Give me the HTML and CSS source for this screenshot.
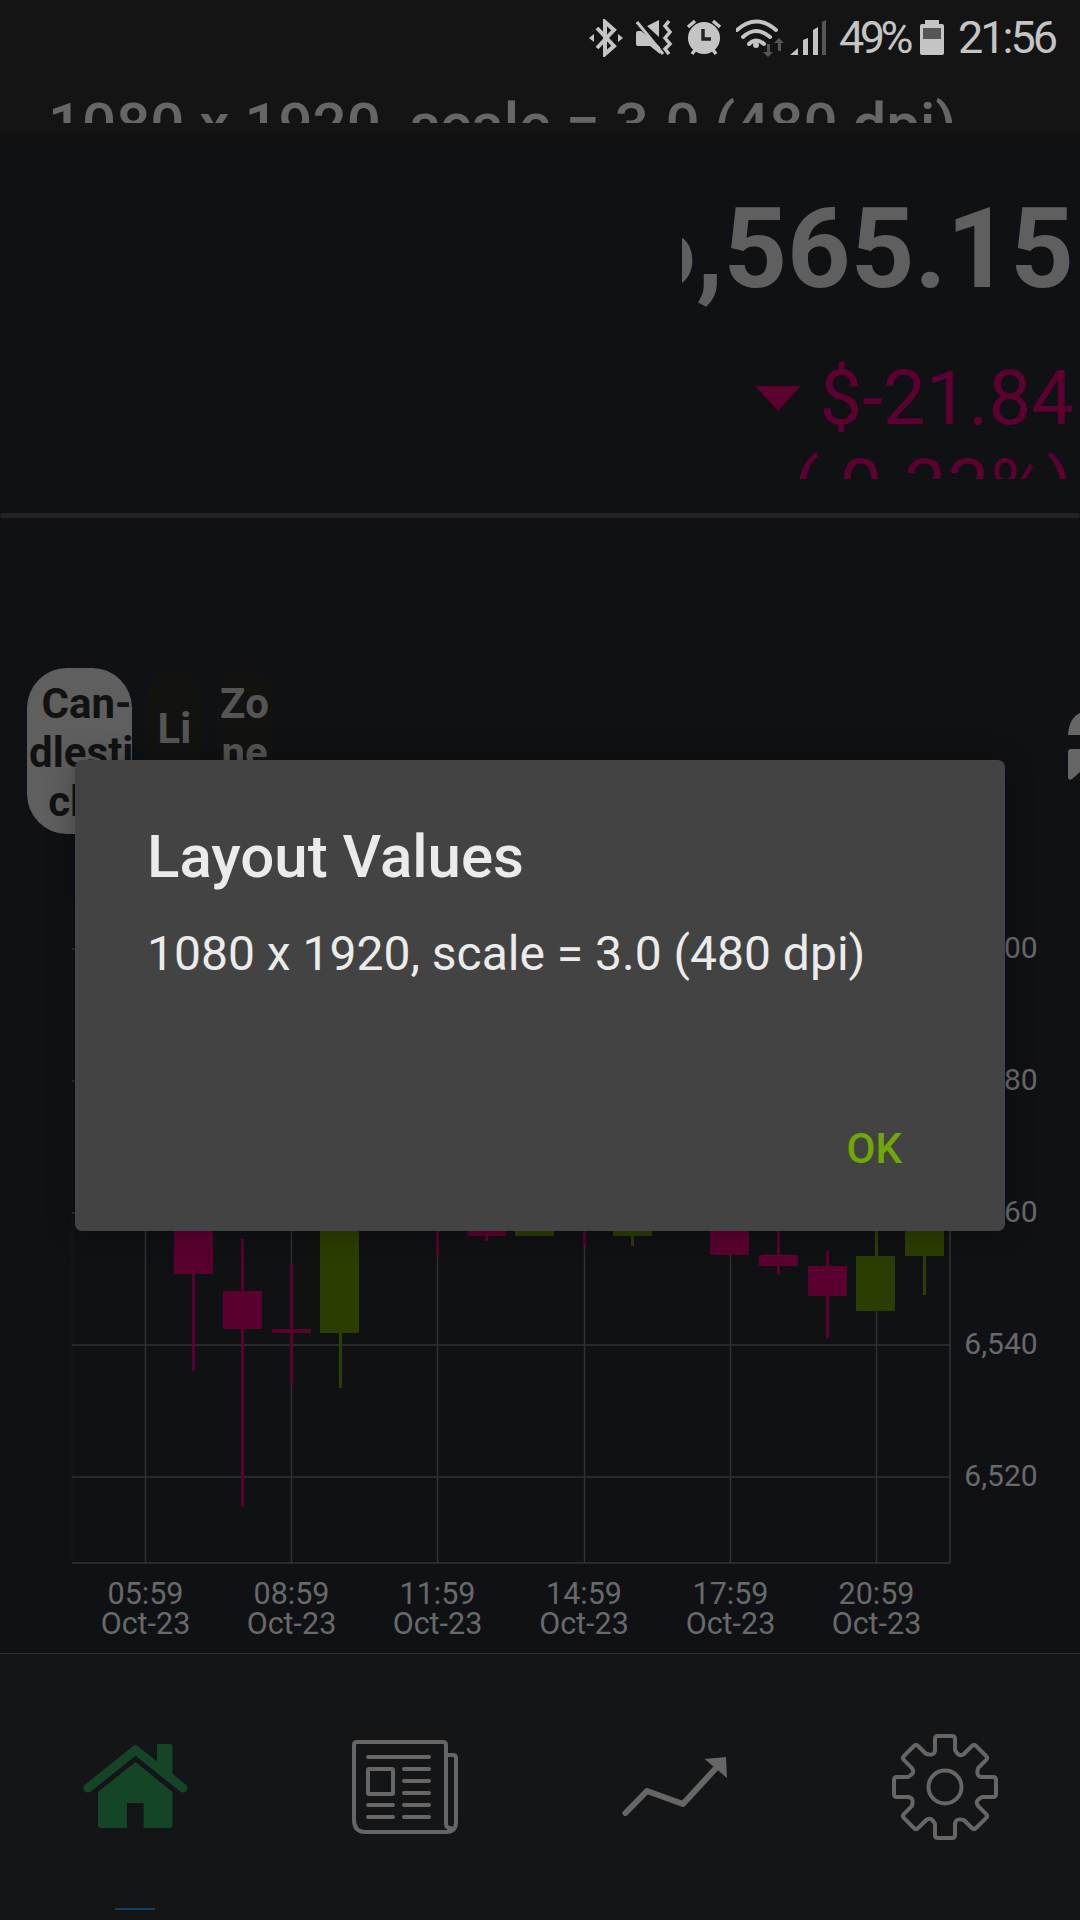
FILE: index.html
```html
<!DOCTYPE html>
<html lang="en">
  <head>
    <meta charset="UTF-8" />
    <meta name="viewport" content="width=device-width, initial-scale=1.0" />
    <title>Layout Values</title>
    <link rel="stylesheet" href="styles.css">
  </head>
  <body>
    <div id="phone">
      <header class="top-band">
        <div class="status-bar">
          <svg class="st-bluetooth" width="34" height="38" viewBox="0 0 34 38">
            <path class="st-line" d="M8 9 L25 27 L16 35 V3 L25 11 L8 29" />
            <path class="st-fill" d="M0 19 L5 15 V23 Z M34 19 L29 15 V23 Z" />
          </svg>
          <svg class="st-mute" width="37" height="35" viewBox="0 0 37 35">
            <path class="st-fill" d="M0 13 Q0 11 2 11 H5 L16 20 L24 27 V34 L14 26 H2 Q0 26 0 24 Z M11 6 L23 0 V17 Z" />
            <path class="st-cut" d="M1 2 L27 34" />
            <path class="st-line thin" d="M33 1 L29 6 L34 12 L29 18 L34 24 L29 29 L33 34" />
          </svg>
          <svg class="st-alarm" width="37" height="37" viewBox="0 0 37 37">
            <circle class="st-fill" cx="18" cy="19" r="16" />
            <path class="st-line thin" d="M2 8 L9 2 M34 8 L27 2 M6 35 L9 31 M30 35 L27 31" />
            <path class="st-hand" d="M17 10 V20 H25" />
          </svg>
          <svg class="st-wifi" width="48" height="38" viewBox="0 0 48 38">
            <path class="st-arc" d="M1 11 Q20 -6 40 11" />
            <path class="st-arc" d="M7 18 Q20 6 34 18" />
            <path class="st-arc" d="M13 25 Q20 18 28 25" />
            <circle class="st-fill" cx="20" cy="26" r="3" />
            <path class="st-dim" d="M31 25 H34 V33 H37 L32 38 L27 33 H31 Z M43 19 L48 24 H45 V32 H42 V24 H38 Z" />
          </svg>
          <svg class="st-signal" width="36" height="36" viewBox="0 0 36 36">
            <path class="st-fill" d="M0 35 L8 28 V35 Z M13 20 L18 18 V35 H13 Z M23 10 L28 7 V35 H23 Z" />
            <path class="st-dim" d="M32 2 L36 0 V35 H32 Z" />
          </svg>
          <span class="st-text">49%</span>
          <svg class="st-battery" width="24" height="35" viewBox="0 0 24 35">
            <path class="st-fill" d="M5 0 H19 V4 H22 Q24 4 24 6 V33 Q24 35 22 35 H2 Q0 35 0 33 V6 Q0 4 2 4 H5 Z" />
            <rect class="st-dim" x="3" y="8" width="18" height="11" />
          </svg>
          <span class="st-text time">21:56</span>
        </div>
        <div class="ghost-title">1080 x 1920, scale = 3.0 (480 dpi)</div>
      </header>

      <section class="quote">
        <div class="price"><span>6,565.15</span></div>
        <div class="change">
          <svg class="arrow-down" width="46" height="25" viewBox="0 0 46 25"><path d="M0 0 H46 L23 25 Z" /></svg>
          <span>$-21.84</span>
        </div>
        <div class="percent">( 0.33%)</div>
      </section>
      <div class="divider"></div>

      <div class="tabs">
        <div class="pill active">Can-<br />dlesti&nbsp;<br />cks&nbsp;</div>
        <div class="pill">Li<br />ne</div>
        <div class="pill">Zo<br />ne<br />s</div>
        <svg class="side-icon" width="12" height="67" viewBox="0 0 12 67">
          <path d="M0 22 Q1 5 12 0 V22 Z M12 36 H3 Q0 36 0 39 V64 Q0 68 4 66 L12 59 Z" />
        </svg>
      </div>

      <svg class="chart" width="1080" height="819" viewBox="0 834 1080 819">
        <g class="grid">
          <path class="axis-left" d="M72 900 V1563" />
          <path d="M72 949 H950 M72 1081 H950 M72 1213 H950 M72 1345 H950 M72 1477 H950" />
          <path d="M145.5 900 V1563 M291.5 900 V1563 M437.5 900 V1563 M584.5 900 V1563 M730.5 900 V1563 M876.5 900 V1563" />
          <path class="axis" d="M72 1563 H950 V900" />
        </g>

        <g class="down">
          <rect x="192" y="1200" width="3" height="171" />
          <rect x="174" y="1200" width="39" height="74" />
          <rect x="241" y="1239" width="3" height="268" />
          <rect x="223" y="1291" width="39" height="38" />
          <rect x="290" y="1264" width="3" height="121" />
          <rect x="272" y="1329" width="39" height="4" />
          <rect x="436" y="1200" width="3" height="56" />
          <rect x="485" y="1200" width="3" height="41" />
          <rect x="467" y="1200" width="39" height="36" />
          <rect x="583" y="1200" width="3" height="46" />
          <rect x="710" y="1200" width="39" height="55" />
          <rect x="777" y="1200" width="3" height="75" />
          <rect x="759" y="1255" width="39" height="11" />
          <rect x="826" y="1251" width="3" height="87" />
          <rect x="808" y="1266" width="39" height="30" />
        </g>
        <g class="up">
          <rect x="339" y="1200" width="3" height="188" />
          <rect x="320" y="1200" width="39" height="133" />
          <rect x="515" y="1200" width="39" height="36" />
          <rect x="631" y="1200" width="3" height="46" />
          <rect x="613" y="1200" width="39" height="36" />
          <rect x="875" y="1200" width="3" height="56" />
          <rect x="856" y="1256" width="39" height="55" />
          <rect x="923" y="1200" width="3" height="95" />
          <rect x="905" y="1200" width="39" height="56" />
        </g>

        <g class="y-labels">
          <text x="1001" y="958">6,600</text>
          <text x="1001" y="1090">6,580</text>
          <text x="1001" y="1222">6,560</text>
          <text x="1001" y="1354">6,540</text>
          <text x="1001" y="1486">6,520</text>
        </g>
        <g class="x-labels">
          <text x="145.5" y="1604">05:59</text><text x="145.5" y="1634">Oct-23</text>
          <text x="291.5" y="1604">08:59</text><text x="291.5" y="1634">Oct-23</text>
          <text x="437.5" y="1604">11:59</text><text x="437.5" y="1634">Oct-23</text>
          <text x="584" y="1604">14:59</text><text x="584" y="1634">Oct-23</text>
          <text x="730.5" y="1604">17:59</text><text x="730.5" y="1634">Oct-23</text>
          <text x="876.5" y="1604">20:59</text><text x="876.5" y="1634">Oct-23</text>
        </g>
      </svg>

      <nav class="bottom-nav">
        <div class="nav-item current">
          <svg width="105" height="85" viewBox="0 0 105 85">
            <path class="home-roof" d="M5 44 L52.5 6 L100 44" />
            <path class="home-fill" d="M74 0 H86 Q89.5 0 89.5 3 V30 L74 18 Z" />
            <path class="home-fill" d="M52.5 18 L89.5 48 V81 Q89.5 84 86 84 H60.6 V59 H44 V84 H18 Q15 84 15 81 V48 Z" />
          </svg>
        </div>
        <div class="nav-item">
          <svg width="106" height="94" viewBox="0 0 106 94">
            <path class="nav-line" d="M94 15 H101 Q104 15 104 18 V82 Q104 92 94 92 H14 Q2 92 2 80 V5 Q2 2 5 2 H91 Q94 2 94 5 V84 Q94 88 99 88" />
            <path class="nav-line" d="M16 17 H77 M52 29 H77 M52 41 H77 M52 53 H77 M16 65 H41 M52 65 H77 M16 77 H41 M52 77 H77" />
            <rect class="nav-line" x="16" y="29" width="25" height="25" rx="1" />
          </svg>
        </div>
        <div class="nav-item">
          <svg width="106" height="60" viewBox="0 0 106 60">
            <path class="nav-trend" d="M3.5 56 L25 34 L61 47 L95 10" />
            <path class="nav-fill" d="M82.6 2 L104 0 L105 21 Z" />
          </svg>
        </div>
        <div class="nav-item">
          <svg width="106" height="106" viewBox="-53 -53 106 106">
            <defs>
              <path id="gear-tooth" d="M-10 -37 V-48 Q-10 -51 -7 -51 H7 Q10 -51 10 -48 V-37 Q14 -29 19.1 -33.2" />
            </defs>
            <g class="nav-line">
              <use href="#gear-tooth" />
              <use href="#gear-tooth" transform="rotate(45)" />
              <use href="#gear-tooth" transform="rotate(90)" />
              <use href="#gear-tooth" transform="rotate(135)" />
              <use href="#gear-tooth" transform="rotate(180)" />
              <use href="#gear-tooth" transform="rotate(225)" />
              <use href="#gear-tooth" transform="rotate(270)" />
              <use href="#gear-tooth" transform="rotate(315)" />
              <circle r="16.5" />
            </g>
          </svg>
        </div>
        <div class="nav-marker"></div>
      </nav>

      <div class="dialog">
        <h2 class="dialog-title">Layout Values</h2>
        <p class="dialog-text">1080 x 1920, scale = 3.0 (480 dpi)</p>
        <div class="dialog-ok">OK</div>
      </div>
    </div>
  </body>
</html>
```

FILE: styles.css
```css
body {
  margin: 0;
  background: #0f1115;
  font-family: Roboto, "Liberation Sans", sans-serif;
}
#phone {
  position: relative;
  width: 1080px;
  height: 1920px;
  overflow: hidden;
  background: #0f1115;
}

/* status bar + clipped title */
.top-band {
  height: 135px;
  background: #141414;
}
.status-bar {
  display: flex;
  justify-content: flex-end;
  align-items: center;
  height: 75px;
  padding-right: 25px;
  box-sizing: border-box;
}
.status-bar svg {
  display: block;
  flex: none;
}
.st-bluetooth { margin-right: 13px; }
.st-mute { margin-right: 13px; }
.st-alarm { margin-right: 13px; }
.st-wifi { margin-right: 6px; }
.st-signal { margin-right: 13px; }
.st-battery { margin-right: 14px; }
.st-fill { fill: #c4c4c4; }
.st-dim { fill: #565656; }
.st-line {
  fill: none;
  stroke: #c4c4c4;
  stroke-width: 4;
}
.st-line.thin { stroke-width: 3.5; }
.st-cut {
  fill: none;
  stroke: #c4c4c4;
  stroke-width: 3;
}
.st-hand {
  fill: none;
  stroke: #222;
  stroke-width: 3.5;
}
.st-arc {
  fill: none;
  stroke: #c4c4c4;
  stroke-width: 4;
  stroke-linecap: round;
}
.st-text {
  font-size: 45px;
  line-height: 50px;
  color: #c4c4c4;
  letter-spacing: -4.5px;
  margin-right: 11px;
}
.st-text.time {
  letter-spacing: -3px;
  margin-right: 0;
}
.ghost-title {
  height: 48px;
  box-sizing: border-box;
  overflow: hidden;
  padding: 20px 0 0 48px;
  font-size: 60px;
  font-weight: 500;
  line-height: 60px;
  white-space: nowrap;
  color: #666;
}

/* quote */
.quote {
  display: flex;
  flex-direction: column;
  align-items: flex-end;
  height: 378px;
  padding-right: 6px;
  box-sizing: border-box;
}
.price {
  display: flex;
  justify-content: flex-end;
  width: 392px;
  height: 130px;
  margin-top: 49px;
  overflow: hidden;
  font-size: 111px;
  font-weight: 700;
  line-height: 130px;
  white-space: nowrap;
  color: #5f5f5f;
}
.change {
  display: flex;
  align-items: center;
  height: 89px;
  margin-top: 40px;
  font-size: 76px;
  line-height: 89px;
  color: #5c0030;
}
.arrow-down {
  margin-right: 18px;
  fill: #5c0030;
}
.percent {
  height: 36px;
  overflow: hidden;
  font-size: 76px;
  line-height: 89px;
  letter-spacing: 0.7px;
  white-space: nowrap;
  color: #5c0030;
}
.divider {
  height: 5px;
  border-radius: 3px;
  background: #222;
}

/* chart type tabs */
.tabs {
  display: flex;
  gap: 15px;
  height: 166px;
  margin-top: 150px;
  padding-left: 27px;
}
.pill {
  display: flex;
  align-items: center;
  justify-content: center;
  width: 55px;
  box-sizing: border-box;
  padding-top: 3px;
  overflow: hidden;
  border-radius: 40px;
  background: #121311;
  font-size: 42px;
  font-weight: 700;
  line-height: 49px;
  text-align: center;
  color: #555;
}
.pill.active {
  width: 105px;
  padding-left: 14px;
  background: #5f5f5f;
  color: #121212;
}
.side-icon {
  margin: 45px 0 0 auto;
  fill: #666;
}

/* chart */
.chart {
  display: block;
}
.grid path {
  fill: none;
  stroke: #313131;
  stroke-width: 1.5;
}
.grid .axis {
  stroke: #343434;
}
.grid .axis-left {
  stroke: #15170f;
}
.down { fill: #59002f; }
.up { fill: #2c3d00; }
.y-labels text,
.x-labels text {
  font-family: Roboto, "Liberation Sans", sans-serif;
  font-size: 30px;
  text-anchor: middle;
  fill: #696969;
}
.x-labels text {
  font-size: 30.5px;
}

/* bottom nav */
.bottom-nav {
  position: relative;
  display: grid;
  grid-template-columns: repeat(4, 270px);
  height: 267px;
  box-sizing: border-box;
  border-top: 1.5px solid #2e2e2e;
  background: #141517;
}
.nav-item {
  display: flex;
  align-items: center;
  justify-content: center;
  height: 265px;
}
.nav-item svg {
  display: block;
  overflow: visible;
}
.nav-line {
  fill: none;
  stroke: #666;
  stroke-width: 4;
  stroke-linecap: round;
  stroke-linejoin: round;
}
.nav-trend {
  fill: none;
  stroke: #666;
  stroke-width: 6;
  stroke-linecap: round;
  stroke-linejoin: round;
}
.nav-fill { fill: #666; }
.home-roof {
  fill: none;
  stroke: #144526;
  stroke-width: 9;
  stroke-linecap: round;
  stroke-linejoin: round;
}
.home-fill { fill: #144526; }
.nav-marker {
  position: absolute;
  left: 115px;
  bottom: 10px;
  width: 40px;
  height: 2px;
  background: #134060;
}

/* dialog */
.dialog {
  position: absolute;
  top: 760px;
  left: 75px;
  display: flex;
  flex-direction: column;
  width: 930px;
  height: 471px;
  box-sizing: border-box;
  padding: 62px 103px 58px 72px;
  border-radius: 7px;
  background: #434343;
  box-shadow: 0 0 30px rgba(0, 0, 0, 0.3);
}
.dialog-title {
  margin: 0;
  font-size: 60px;
  font-weight: 500;
  line-height: 70px;
  color: #ebebeb;
}
.dialog-text {
  margin: 34px 0 0;
  font-size: 48px;
  line-height: 56px;
  color: #ebebeb;
}
.dialog-ok {
  margin-top: auto;
  align-self: flex-end;
  font-size: 42px;
  font-weight: 500;
  line-height: 49px;
  color: #6fa800;
}
```
